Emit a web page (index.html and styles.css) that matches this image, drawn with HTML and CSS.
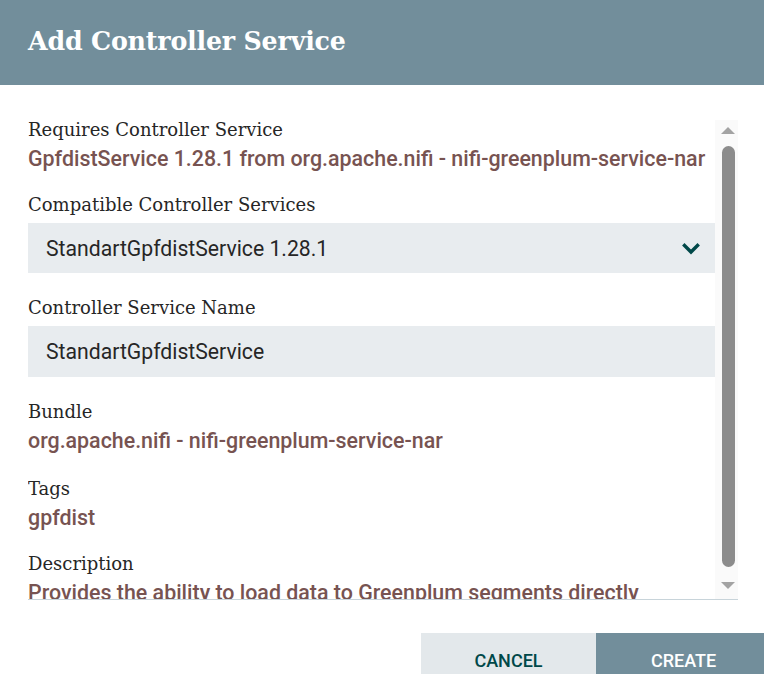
FILE: index.html
```html
<!DOCTYPE html>
<html>
<head>
<meta charset="utf-8">
<link rel="stylesheet" href="styles.css">
</head>
<body>
<div class="dialog">
  <div class="header"><h1 class="title">Add Controller Service</h1></div>
  <div class="body">
    <div class="scroll">
      <div class="content">
        <div class="setting">
          <div class="label">Requires Controller Service</div>
          <div class="value">GpfdistService 1.28.1 from org.apache.nifi - nifi-greenplum-service-nar</div>
        </div>
        <div class="setting">
          <div class="label">Compatible Controller Services</div>
          <div class="combo">
            <span>StandartGpfdistService 1.28.1</span>
            <svg class="chev" width="18" height="12" viewBox="0 0 18 12"><polyline points="2.5,2.5 9,9 15.5,2.5" fill="none" stroke="#004849" stroke-width="3.4" stroke-linecap="square"/></svg>
          </div>
        </div>
        <div class="setting">
          <div class="label">Controller Service Name</div>
          <div class="input">StandartGpfdistService</div>
        </div>
        <div class="setting">
          <div class="label">Bundle</div>
          <div class="value">org.apache.nifi - nifi-greenplum-service-nar</div>
        </div>
        <div class="setting tags">
          <div class="label">Tags</div>
          <div class="value">gpfdist</div>
        </div>
        <div class="setting">
          <div class="label">Description</div>
          <div class="value">Provides the ability to load data to Greenplum segments directly</div>
        </div>
      </div>
      <div class="scrollbar">
        <div class="arrow up"></div>
        <div class="thumb"></div>
        <div class="arrow down"></div>
      </div>
    </div>
  </div>
  <div class="footer">
    <div class="btn cancel">CANCEL</div>
    <div class="btn create">CREATE</div>
  </div>
</div>
</body>
</html>
```

FILE: styles.css
```css
html, body {
  margin: 0;
  padding: 0;
  width: 764px;
  height: 674px;
  overflow: hidden;
  background: #ffffff;
}
.dialog {
  width: 764px;
  display: flex;
  flex-direction: column;
}
.header {
  height: 85px;
  background: #728e9b;
  display: flex;
  align-items: center;
  padding-left: 28px;
  box-sizing: border-box;
}
.title {
  margin: 0 0 4px 0;
  font-family: "DejaVu Serif", serif;
  font-weight: bold;
  font-size: 25.3px;
  color: #ffffff;
  letter-spacing: -0.2px;
}
.body {
  padding: 34px 26px 0 28px;
}
.scroll {
  height: 481px;
  overflow: hidden;
  display: flex;
  border-bottom: 1px solid #c8d4da;
  box-sizing: border-box;
}
.content {
  width: 687px;
  display: flex;
  flex-direction: column;
  gap: 24px;
}
.setting {
  display: flex;
  flex-direction: column;
  gap: 7px;
}
.setting.tags {
  margin-top: 2px;
}
.label {
  font-family: "DejaVu Serif", serif;
  font-size: 18px;
  line-height: 22px;
  color: #262626;
  white-space: nowrap;
}
.value {
  font-family: Roboto, sans-serif;
  font-weight: 500;
  font-size: 21.4px;
  line-height: 22px;
  color: #775351;
  white-space: nowrap;
}
.combo, .input {
  background: #e8ecef;
  font-family: Roboto, sans-serif;
  font-size: 21.2px;
  color: #262626;
  padding-left: 18px;
  display: flex;
  align-items: center;
}
.combo {
  height: 50px;
  justify-content: space-between;
  padding-right: 15px;
}
.input {
  height: 51px;
}
.chev {
  display: block;
  margin-top: 1px;
}
.scrollbar {
  width: 23px;
  background: #fafafa;
  margin-top: 1px;
  display: flex;
  flex-direction: column;
  align-items: center;
  padding-top: 7px;
  box-sizing: border-box;
}
.arrow {
  width: 0;
  height: 0;
  border-left: 7px solid transparent;
  border-right: 7px solid transparent;
  margin-left: 3px;
}
.arrow.up {
  border-bottom: 7px solid #a3a3a3;
}
.arrow.down {
  border-top: 7px solid #a3a3a3;
  margin-top: 15px;
}
.thumb {
  width: 13px;
  height: 421px;
  margin-left: 3px;
  margin-top: 12px;
  background: #8c8c8c;
  border-radius: 7px;
}
.footer {
  display: flex;
  padding-left: 421px;
  margin-top: 33px;
}
.btn {
  flex: none;
  height: 52px;
  display: flex;
  align-items: center;
  justify-content: center;
  font-family: Roboto, sans-serif;
  font-weight: 500;
  font-size: 18px;
  padding-top: 2px;
  box-sizing: border-box;
}
.cancel {
  width: 175px;
  background: #e3e8eb;
  color: #004849;
}
.create {
  width: 175px;
  background: #728e9b;
  color: #ffffff;
}
```
